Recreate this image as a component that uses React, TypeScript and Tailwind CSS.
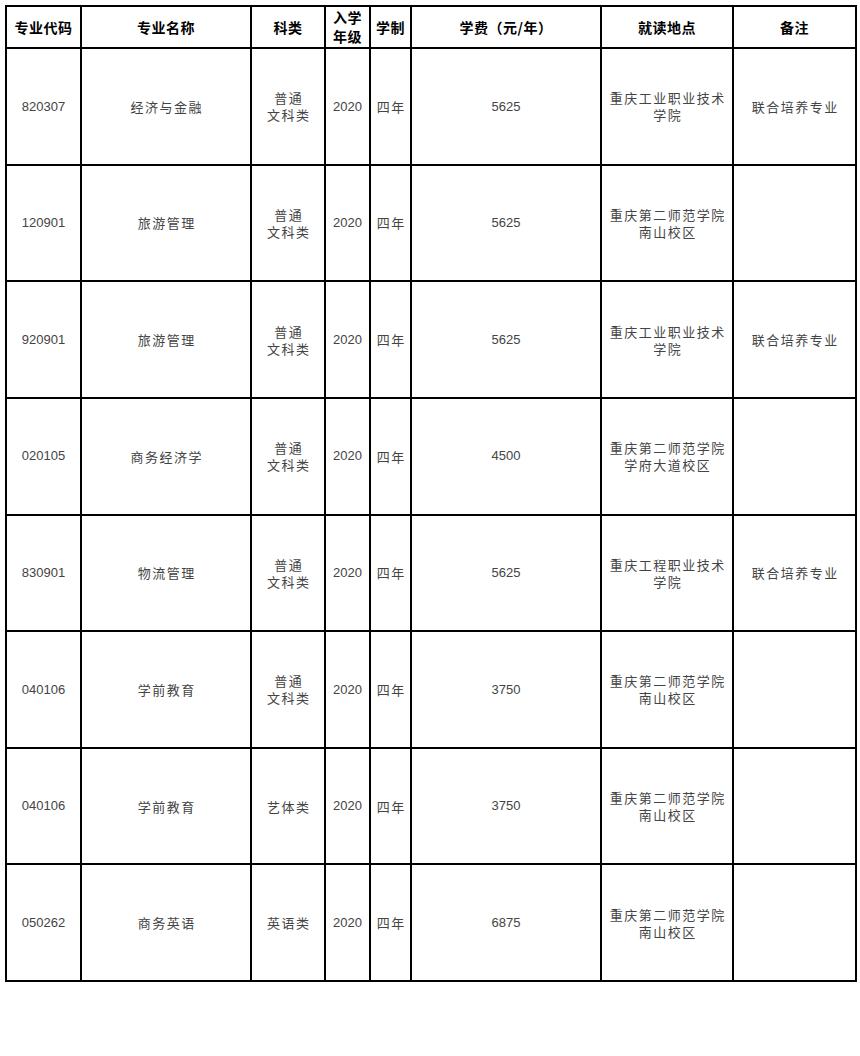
import React from "react";

type Row = {
  code: string;
  name: string;
  cat: string[];
  year: string;
  len: string;
  fee: string;
  place: string[];
  note: string;
};

const rows: Row[] = [
  { code: "820307", name: "经济与金融", cat: ["普通", "文科类"], year: "2020", len: "四年", fee: "5625", place: ["重庆工业职业技术", "学院"], note: "联合培养专业" },
  { code: "120901", name: "旅游管理", cat: ["普通", "文科类"], year: "2020", len: "四年", fee: "5625", place: ["重庆第二师范学院", "南山校区"], note: "" },
  { code: "920901", name: "旅游管理", cat: ["普通", "文科类"], year: "2020", len: "四年", fee: "5625", place: ["重庆工业职业技术", "学院"], note: "联合培养专业" },
  { code: "020105", name: "商务经济学", cat: ["普通", "文科类"], year: "2020", len: "四年", fee: "4500", place: ["重庆第二师范学院", "学府大道校区"], note: "" },
  { code: "830901", name: "物流管理", cat: ["普通", "文科类"], year: "2020", len: "四年", fee: "5625", place: ["重庆工程职业技术", "学院"], note: "联合培养专业" },
  { code: "040106", name: "学前教育", cat: ["普通", "文科类"], year: "2020", len: "四年", fee: "3750", place: ["重庆第二师范学院", "南山校区"], note: "" },
  { code: "040106", name: "学前教育", cat: ["艺体类"], year: "2020", len: "四年", fee: "3750", place: ["重庆第二师范学院", "南山校区"], note: "" },
  { code: "050262", name: "商务英语", cat: ["英语类"], year: "2020", len: "四年", fee: "6875", place: ["重庆第二师范学院", "南山校区"], note: "" },
];

const cjk = "font-['Noto_Sans_CJK_SC','Noto_Sans',sans-serif]";
const num = "font-['Liberation_Sans','Arial',sans-serif]";

function Head({ children }: { children: React.ReactNode }) {
  return (
    <div className={`bg-white flex items-center justify-center text-center ${cjk} font-bold text-[14px] leading-[17px] tracking-[0.5px] text-black`}>
      {children}
    </div>
  );
}

function Txt({ lines }: { lines: string[] }) {
  return (
    <div className={`bg-white flex flex-col items-center justify-center text-center ${cjk} text-[13px] leading-[17px] tracking-[1.5px] text-[#444]`}>
      {lines.map((l, i) => (
        <div key={i} className="pl-[1.5px]">{l}</div>
      ))}
    </div>
  );
}

function Num({ v }: { v: string }) {
  return (
    <div className={`bg-white flex items-center justify-center text-center ${num} text-[13px] text-[#444]`}>
      {v}
    </div>
  );
}

export default function App() {
  return (
    <div className="w-[860px] h-[1056px] bg-white pt-[5px] pl-[5px]">
      <div className="grid w-[852px] bg-black p-[2px] gap-[2px] grid-cols-[73px_168px_72px_43px_39px_188px_130px_121px] grid-rows-[40px_repeat(8,114.625px)]">
        <Head>专业代码</Head>
        <Head>专业名称</Head>
        <Head>科类</Head>
        <Head>
          <div className="flex flex-col">
            <div className="h-[19px] leading-[19px]">入学</div>
            <div className="h-[19px] leading-[19px]">年级</div>
          </div>
        </Head>
        <Head>学制</Head>
        <Head>学费（元/年）</Head>
        <Head>就读地点</Head>
        <Head>备注</Head>
        {rows.map((r, i) => (
          <React.Fragment key={i}>
            <Num v={r.code} />
            <Txt lines={[r.name]} />
            <Txt lines={r.cat} />
            <Num v={r.year} />
            <Txt lines={[r.len]} />
            <Num v={r.fee} />
            <Txt lines={r.place} />
            <Txt lines={r.note ? [r.note] : []} />
          </React.Fragment>
        ))}
      </div>
    </div>
  );
}
